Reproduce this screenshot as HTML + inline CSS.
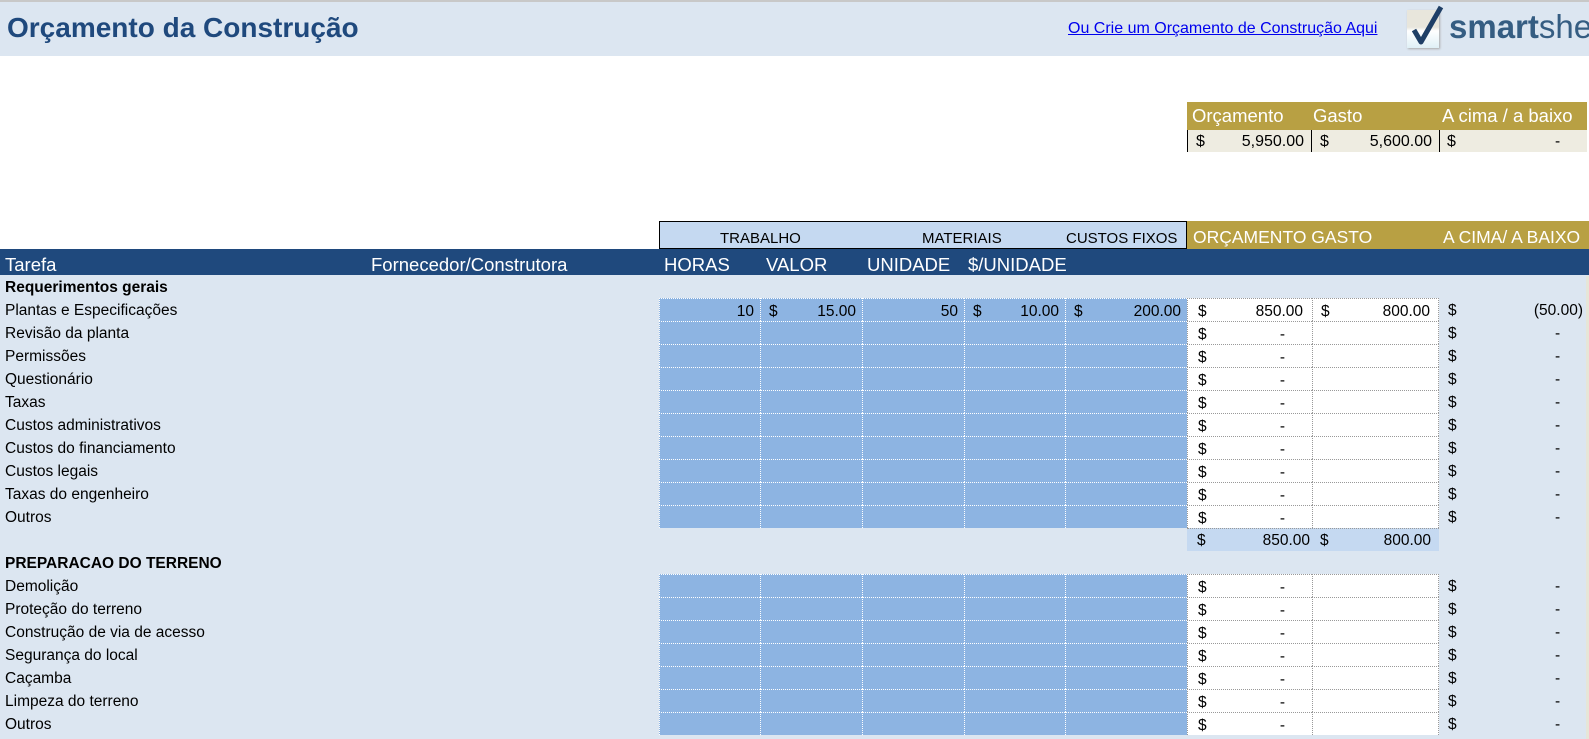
<!DOCTYPE html>
<html><head><meta charset="utf-8"><style>
*{margin:0;padding:0;box-sizing:border-box}
body{width:1589px;height:739px;overflow:hidden;background:#dce6f1;font-family:"Liberation Sans",sans-serif;font-size:15.5px;color:#000;position:relative}
.a{position:absolute;white-space:nowrap}
.w{position:absolute;left:0;top:56px;width:1589px;height:196px;background:#fff}
.row{position:absolute;left:0;width:1589px;height:23px}
.row .t{position:absolute;left:5px;top:4px;white-space:nowrap}
.b{position:absolute;top:0;height:23px;background:#8db4e2;border-left:1px dotted #fff;border-top:1px dotted #fff}
.c{position:absolute;top:0;height:23px;background:#fff;border-left:1px dotted #999;border-top:1px dotted #999}
.d{position:absolute;top:4px}
.v{position:absolute;top:4px;text-align:right}
.h{position:absolute;color:#fff;font-size:18.5px;top:254px;white-space:nowrap}
</style></head><body>
<div class="a" style="left:0;top:0;width:1589px;height:2px;background:#c8c8c8"></div>
<div class="a" style="left:7px;top:12px;font-size:28px;font-weight:bold;color:#1f497d">Orçamento da Construção</div>
<div class="a" style="left:1068px;top:20px;font-size:16px;color:#0000ee;text-decoration:underline">Ou Crie um Orçamento de Construção Aqui</div>
<div class="a" style="left:1407px;top:10px;width:32px;height:38px;background:linear-gradient(#e8e6dc 0,#e8e6dc 45%,#fff 55%,#dff0f6 100%);box-shadow:1px 1px 2px #aaa"></div>
<svg class="a" style="left:1405px;top:4px" width="40" height="44"><path d="M9 26 L16 38 L36 3" stroke="#1f3f66" stroke-width="5" fill="none" stroke-linejoin="round"/></svg>
<div class="a" style="left:1449px;top:8px;font-size:33px;color:#355d82"><b>smart</b>shee</div>
<div class="w"></div>
<!-- summary -->
<div class="a" style="left:1187px;top:102px;width:400px;height:28px;background:#b8a043"></div>
<div class="a" style="left:1192px;top:105px;color:#fff;font-size:18.5px">Orçamento</div>
<div class="a" style="left:1313px;top:105px;color:#fff;font-size:18.5px">Gasto</div>
<div class="a" style="left:1442px;top:105px;color:#fff;font-size:18.5px">A cima / a baixo</div>
<div class="a" style="left:1187px;top:130px;width:400px;height:22px;background:#eeece1;border-left:1px solid #000"></div>
<div class="a" style="left:1311px;top:130px;width:1px;height:22px;background:#000"></div>
<div class="a" style="left:1439px;top:130px;width:1px;height:22px;background:#000"></div>
<div class="a" style="left:1196px;top:133px;font-size:16px">$</div><div class="a" style="left:1220px;top:133px;width:84px;text-align:right;font-size:16px">5,950.00</div>
<div class="a" style="left:1320px;top:133px;font-size:16px">$</div><div class="a" style="left:1345px;top:133px;width:87px;text-align:right;font-size:16px">5,600.00</div>
<div class="a" style="left:1447px;top:133px;font-size:16px">$</div><div class="a" style="left:1555px;top:133px">-</div>
<!-- header row -->
<div class="a" style="left:659px;top:221px;width:528px;height:28px;background:#c5d9f1;border:1px solid #000"></div>
<div class="a" style="left:720px;top:230px;font-size:15px">TRABALHO</div>
<div class="a" style="left:922px;top:230px;font-size:15px">MATERIAIS</div>
<div class="a" style="left:1066px;top:230px;font-size:15px">CUSTOS FIXOS</div>
<div class="a" style="left:1187px;top:221px;width:402px;height:28px;background:#b8a043"></div>
<div class="a" style="left:1193px;top:227px;color:#fff;font-size:17.5px">ORÇAMENTO GASTO</div>
<div class="a" style="left:1443px;top:227px;color:#fff;font-size:17.5px">A CIMA/ A BAIXO</div>
<div class="a" style="left:0;top:249px;width:1589px;height:26px;background:#1f497d"></div>
<div class="h" style="left:5px">Tarefa</div>
<div class="h" style="left:371px">Fornecedor/Construtora</div>
<div class="h" style="left:664px">HORAS</div>
<div class="h" style="left:766px">VALOR</div>
<div class="h" style="left:867px">UNIDADE</div>
<div class="h" style="left:968px">$/UNIDADE</div>
<div class="a" style="left:1586px;top:276px;width:3px;height:463px;background:#e6e6d8"></div>

<div class="row" style="top:275px"><span class="t" style="font-weight:bold">Requerimentos gerais</span></div>

<div class="row" style="top:298px"><span class="t">Plantas e Especificações</span>
<div class="b" style="left:659px;width:101px"><span class="v" style="right:6px">10</span></div>
<div class="b" style="left:760px;width:102px"><span class="d" style="left:8px">$</span><span class="v" style="right:6px">15.00</span></div>
<div class="b" style="left:862px;width:102px"><span class="v" style="right:6px">50</span></div>
<div class="b" style="left:964px;width:101px"><span class="d" style="left:8px">$</span><span class="v" style="right:6px">10.00</span></div>
<div class="b" style="left:1065px;width:122px"><span class="d" style="left:8px">$</span><span class="v" style="right:6px">200.00</span></div>
<div class="c" style="left:1187px;width:125px"><span class="d" style="left:10px">$</span><span class="v" style="right:9px">850.00</span></div>
<div class="c" style="left:1312px;width:127px;border-right:1px dotted #999"><span class="d" style="left:8px">$</span><span class="v" style="right:8px">800.00</span></div>
<span class="d" style="left:1448px">$</span><span class="v" style="right:6px">(50.00)</span></div>

<div class="row e" style="top:321px"><span class="t">Revisão da planta</span><div class="b" style="left:659px;width:101px"></div><div class="b" style="left:760px;width:102px"></div><div class="b" style="left:862px;width:102px"></div><div class="b" style="left:964px;width:101px"></div><div class="b" style="left:1065px;width:122px"></div><div class="c" style="left:1187px;width:125px"><span class="d" style="left:10px">$</span><span class="v" style="right:27px">-</span></div><div class="c" style="left:1312px;width:127px;border-right:1px dotted #999"></div><span class="d" style="left:1448px">$</span><span class="v" style="left:1555px">-</span></div>
<div class="row e" style="top:344px"><span class="t">Permissões</span><div class="b" style="left:659px;width:101px"></div><div class="b" style="left:760px;width:102px"></div><div class="b" style="left:862px;width:102px"></div><div class="b" style="left:964px;width:101px"></div><div class="b" style="left:1065px;width:122px"></div><div class="c" style="left:1187px;width:125px"><span class="d" style="left:10px">$</span><span class="v" style="right:27px">-</span></div><div class="c" style="left:1312px;width:127px;border-right:1px dotted #999"></div><span class="d" style="left:1448px">$</span><span class="v" style="left:1555px">-</span></div>
<div class="row e" style="top:367px"><span class="t">Questionário</span><div class="b" style="left:659px;width:101px"></div><div class="b" style="left:760px;width:102px"></div><div class="b" style="left:862px;width:102px"></div><div class="b" style="left:964px;width:101px"></div><div class="b" style="left:1065px;width:122px"></div><div class="c" style="left:1187px;width:125px"><span class="d" style="left:10px">$</span><span class="v" style="right:27px">-</span></div><div class="c" style="left:1312px;width:127px;border-right:1px dotted #999"></div><span class="d" style="left:1448px">$</span><span class="v" style="left:1555px">-</span></div>
<div class="row e" style="top:390px"><span class="t">Taxas</span><div class="b" style="left:659px;width:101px"></div><div class="b" style="left:760px;width:102px"></div><div class="b" style="left:862px;width:102px"></div><div class="b" style="left:964px;width:101px"></div><div class="b" style="left:1065px;width:122px"></div><div class="c" style="left:1187px;width:125px"><span class="d" style="left:10px">$</span><span class="v" style="right:27px">-</span></div><div class="c" style="left:1312px;width:127px;border-right:1px dotted #999"></div><span class="d" style="left:1448px">$</span><span class="v" style="left:1555px">-</span></div>
<div class="row e" style="top:413px"><span class="t">Custos administrativos</span><div class="b" style="left:659px;width:101px"></div><div class="b" style="left:760px;width:102px"></div><div class="b" style="left:862px;width:102px"></div><div class="b" style="left:964px;width:101px"></div><div class="b" style="left:1065px;width:122px"></div><div class="c" style="left:1187px;width:125px"><span class="d" style="left:10px">$</span><span class="v" style="right:27px">-</span></div><div class="c" style="left:1312px;width:127px;border-right:1px dotted #999"></div><span class="d" style="left:1448px">$</span><span class="v" style="left:1555px">-</span></div>
<div class="row e" style="top:436px"><span class="t">Custos do financiamento</span><div class="b" style="left:659px;width:101px"></div><div class="b" style="left:760px;width:102px"></div><div class="b" style="left:862px;width:102px"></div><div class="b" style="left:964px;width:101px"></div><div class="b" style="left:1065px;width:122px"></div><div class="c" style="left:1187px;width:125px"><span class="d" style="left:10px">$</span><span class="v" style="right:27px">-</span></div><div class="c" style="left:1312px;width:127px;border-right:1px dotted #999"></div><span class="d" style="left:1448px">$</span><span class="v" style="left:1555px">-</span></div>
<div class="row e" style="top:459px"><span class="t">Custos legais</span><div class="b" style="left:659px;width:101px"></div><div class="b" style="left:760px;width:102px"></div><div class="b" style="left:862px;width:102px"></div><div class="b" style="left:964px;width:101px"></div><div class="b" style="left:1065px;width:122px"></div><div class="c" style="left:1187px;width:125px"><span class="d" style="left:10px">$</span><span class="v" style="right:27px">-</span></div><div class="c" style="left:1312px;width:127px;border-right:1px dotted #999"></div><span class="d" style="left:1448px">$</span><span class="v" style="left:1555px">-</span></div>
<div class="row e" style="top:482px"><span class="t">Taxas do engenheiro</span><div class="b" style="left:659px;width:101px"></div><div class="b" style="left:760px;width:102px"></div><div class="b" style="left:862px;width:102px"></div><div class="b" style="left:964px;width:101px"></div><div class="b" style="left:1065px;width:122px"></div><div class="c" style="left:1187px;width:125px"><span class="d" style="left:10px">$</span><span class="v" style="right:27px">-</span></div><div class="c" style="left:1312px;width:127px;border-right:1px dotted #999"></div><span class="d" style="left:1448px">$</span><span class="v" style="left:1555px">-</span></div>
<div class="row e" style="top:505px"><span class="t">Outros</span><div class="b" style="left:659px;width:101px"></div><div class="b" style="left:760px;width:102px"></div><div class="b" style="left:862px;width:102px"></div><div class="b" style="left:964px;width:101px"></div><div class="b" style="left:1065px;width:122px"></div><div class="c" style="left:1187px;width:125px"><span class="d" style="left:10px">$</span><span class="v" style="right:27px">-</span></div><div class="c" style="left:1312px;width:127px;border-right:1px dotted #999"></div><span class="d" style="left:1448px">$</span><span class="v" style="left:1555px">-</span></div>

<div class="row" style="top:528px">
<div class="a" style="left:1187px;top:0;width:252px;height:23px;background:#c5d9f1;border-top:1px dotted #999"></div>
<span class="d" style="left:1197px">$</span><span class="v" style="left:1215px;width:95px">850.00</span>
<span class="d" style="left:1320px">$</span><span class="v" style="left:1336px;width:95px">800.00</span></div>

<div class="row" style="top:551px"><span class="t" style="font-weight:bold">PREPARACAO DO TERRENO</span></div>

<div class="row e" style="top:574px"><span class="t">Demolição</span><div class="b" style="left:659px;width:101px"></div><div class="b" style="left:760px;width:102px"></div><div class="b" style="left:862px;width:102px"></div><div class="b" style="left:964px;width:101px"></div><div class="b" style="left:1065px;width:122px"></div><div class="c" style="left:1187px;width:125px"><span class="d" style="left:10px">$</span><span class="v" style="right:27px">-</span></div><div class="c" style="left:1312px;width:127px;border-right:1px dotted #999"></div><span class="d" style="left:1448px">$</span><span class="v" style="left:1555px">-</span></div>
<div class="row e" style="top:597px"><span class="t">Proteção do terreno</span><div class="b" style="left:659px;width:101px"></div><div class="b" style="left:760px;width:102px"></div><div class="b" style="left:862px;width:102px"></div><div class="b" style="left:964px;width:101px"></div><div class="b" style="left:1065px;width:122px"></div><div class="c" style="left:1187px;width:125px"><span class="d" style="left:10px">$</span><span class="v" style="right:27px">-</span></div><div class="c" style="left:1312px;width:127px;border-right:1px dotted #999"></div><span class="d" style="left:1448px">$</span><span class="v" style="left:1555px">-</span></div>
<div class="row e" style="top:620px"><span class="t">Construção de via de acesso</span><div class="b" style="left:659px;width:101px"></div><div class="b" style="left:760px;width:102px"></div><div class="b" style="left:862px;width:102px"></div><div class="b" style="left:964px;width:101px"></div><div class="b" style="left:1065px;width:122px"></div><div class="c" style="left:1187px;width:125px"><span class="d" style="left:10px">$</span><span class="v" style="right:27px">-</span></div><div class="c" style="left:1312px;width:127px;border-right:1px dotted #999"></div><span class="d" style="left:1448px">$</span><span class="v" style="left:1555px">-</span></div>
<div class="row e" style="top:643px"><span class="t">Segurança do local</span><div class="b" style="left:659px;width:101px"></div><div class="b" style="left:760px;width:102px"></div><div class="b" style="left:862px;width:102px"></div><div class="b" style="left:964px;width:101px"></div><div class="b" style="left:1065px;width:122px"></div><div class="c" style="left:1187px;width:125px"><span class="d" style="left:10px">$</span><span class="v" style="right:27px">-</span></div><div class="c" style="left:1312px;width:127px;border-right:1px dotted #999"></div><span class="d" style="left:1448px">$</span><span class="v" style="left:1555px">-</span></div>
<div class="row e" style="top:666px"><span class="t">Caçamba</span><div class="b" style="left:659px;width:101px"></div><div class="b" style="left:760px;width:102px"></div><div class="b" style="left:862px;width:102px"></div><div class="b" style="left:964px;width:101px"></div><div class="b" style="left:1065px;width:122px"></div><div class="c" style="left:1187px;width:125px"><span class="d" style="left:10px">$</span><span class="v" style="right:27px">-</span></div><div class="c" style="left:1312px;width:127px;border-right:1px dotted #999"></div><span class="d" style="left:1448px">$</span><span class="v" style="left:1555px">-</span></div>
<div class="row e" style="top:689px"><span class="t">Limpeza do terreno</span><div class="b" style="left:659px;width:101px"></div><div class="b" style="left:760px;width:102px"></div><div class="b" style="left:862px;width:102px"></div><div class="b" style="left:964px;width:101px"></div><div class="b" style="left:1065px;width:122px"></div><div class="c" style="left:1187px;width:125px"><span class="d" style="left:10px">$</span><span class="v" style="right:27px">-</span></div><div class="c" style="left:1312px;width:127px;border-right:1px dotted #999"></div><span class="d" style="left:1448px">$</span><span class="v" style="left:1555px">-</span></div>
<div class="row e" style="top:712px"><span class="t">Outros</span><div class="b" style="left:659px;width:101px"></div><div class="b" style="left:760px;width:102px"></div><div class="b" style="left:862px;width:102px"></div><div class="b" style="left:964px;width:101px"></div><div class="b" style="left:1065px;width:122px"></div><div class="c" style="left:1187px;width:125px"><span class="d" style="left:10px">$</span><span class="v" style="right:27px">-</span></div><div class="c" style="left:1312px;width:127px;border-right:1px dotted #999"></div><span class="d" style="left:1448px">$</span><span class="v" style="left:1555px">-</span></div>
</body></html>
